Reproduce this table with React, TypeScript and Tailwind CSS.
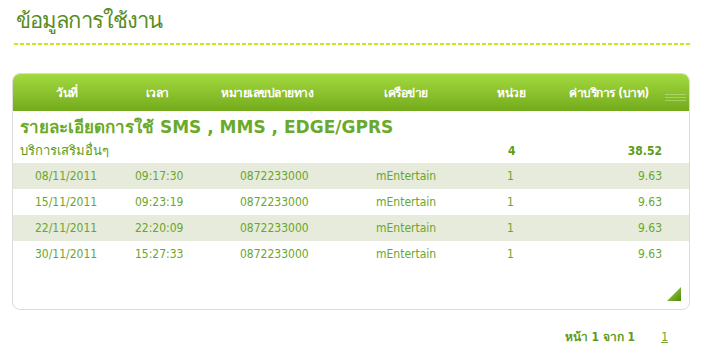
import React from "react";

// ─── Usage rows ─────────────────────────────────────────────────────────────
const ROWS = [
  { date: "08/11/2011", time: "09:17:30", number: "0872233000", network: "mEntertain", unit: "1", price: "9.63" },
  { date: "15/11/2011", time: "09:23:19", number: "0872233000", network: "mEntertain", unit: "1", price: "9.63" },
  { date: "22/11/2011", time: "22:20:09", number: "0872233000", network: "mEntertain", unit: "1", price: "9.63" },
  { date: "30/11/2011", time: "15:27:33", number: "0872233000", network: "mEntertain", unit: "1", price: "9.63" },
];

const FONT = "font-['Tahoma','DejaVu_Sans_Condensed','DejaVu_Sans',sans-serif]";
const WIDE = "font-['Tahoma','DejaVu_Sans',sans-serif]";

// fixed column template shared by header and rows
const COLS = "grid grid-cols-[108px_72px_148px_130px_80px_138px]";

export default function App() {
  return (
    <div className={`w-[704px] h-[356px] bg-white ${FONT} overflow-hidden`}>
      {/* Page title */}
      <div className="px-[14px] pt-[6px]">
        <h1 className={`${WIDE} text-[22px] tracking-[-0.9px] leading-[30px] text-[#5a8c1c] pl-[2px]`}>ข้อมูลการใช้งาน</h1>
        <div className="mt-[7px] w-[676px] h-[2px] bg-[repeating-linear-gradient(90deg,#cce31c_0_4px,transparent_4px_6px)]" />
      </div>

      {/* Usage card */}
      <div className="ml-[12px] mt-[28px] w-[678px] h-[237px] rounded-[8px] border border-[#dcdcdc] flex flex-col overflow-hidden">
        <div className={`${COLS} h-[37px] items-center bg-gradient-to-b from-[#a3da3e] to-[#74ab1c] text-white text-[12px] font-bold tracking-[-0.5px] relative`}>
          <div className="text-center">วันที่</div>
          <div className="text-center">เวลา</div>
          <div className="text-center">หมายเลขปลายทาง</div>
          <div className="text-center">เครือข่าย</div>
          <div className="text-center">หน่วย</div>
          <div className="text-center pr-[22px]">ค่าบริการ (บาท)</div>
          <div className="absolute right-[3px] top-[20px] w-[21px] flex flex-col gap-[2px] opacity-30">
            <div className="h-px bg-white" />
            <div className="h-px bg-white" />
            <div className="h-px bg-white" />
          </div>
        </div>

        <div className={`${WIDE} px-[7px] pt-[4px] h-[25px] text-[17px] font-bold text-[#6aaa2a] leading-[25px]`}>
          รายละเอียดการใช้ SMS , MMS , EDGE/GPRS
        </div>
        <div className={`${COLS} h-[27px] pt-[3px] items-center text-[12px] font-bold text-[#5c9c1c]`}>
          <div className="pl-[7px] font-normal text-[13px] col-span-4">บริการเสริมอื่นๆ</div>
          <div className="pl-[37px]">4</div>
          <div className="text-right pr-[27px]">38.52</div>
        </div>

        {ROWS.map((r, i) => (
          <div
            key={r.date}
            className={`${COLS} h-[26px] items-center text-[12px] text-[#6aa62c] ${i % 2 === 0 ? "bg-[#e7ebdb]" : "bg-white"}`}
          >
            <div className="pl-[22px]">{r.date}</div>
            <div className="pl-[14px]">{r.time}</div>
            <div className="pl-[47px]">{r.number}</div>
            <div className="pl-[35px]">{r.network}</div>
            <div className="pl-[36px]">{r.unit}</div>
            <div className="text-right pr-[27px]">{r.price}</div>
          </div>
        ))}

        <div className="flex-1 flex items-end justify-end pr-[8px] pb-[8px]">
          <svg width="14" height="14" viewBox="0 0 14 14">
            <defs>
              <linearGradient id="corner" x1="0" y1="0" x2="1" y2="1">
                <stop offset="0" stopColor="#a8d84a" />
                <stop offset="1" stopColor="#4e8a0c" />
              </linearGradient>
            </defs>
            <polygon points="14,0 14,14 0,14" fill="url(#corner)" />
          </svg>
        </div>
      </div>

      {/* Pager */}
      <div className="mt-[18px] w-[678px] ml-[12px] flex justify-end items-center text-[12px] text-[#5c9c1c]">
        <span className="font-bold">หน้า 1 จาก 1</span>
        <span className="ml-[26px] mr-[22px] underline text-[#6aa62c]">1</span>
      </div>
    </div>
  );
}
